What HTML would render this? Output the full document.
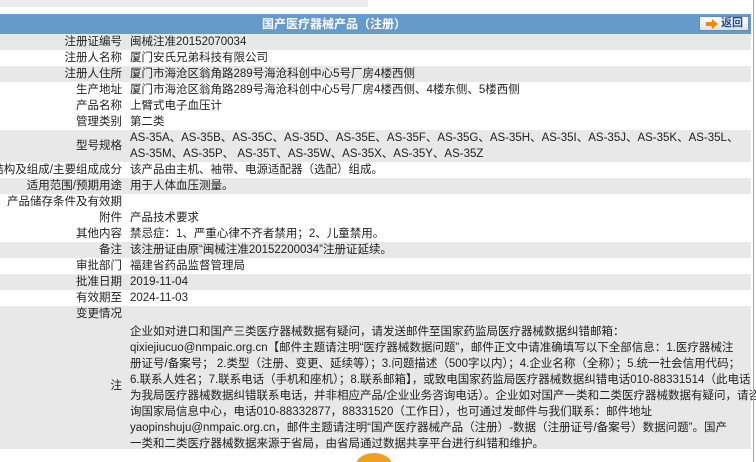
<!DOCTYPE html>
<html><head><meta charset="utf-8"><style>
html,body{margin:0;padding:0;background:#fff;width:756px;height:462px;overflow:hidden;position:relative;
font-family:"Liberation Sans","Noto Sans CJK SC",sans-serif;font-size:11.5px;color:#222;}
.top{position:absolute;left:0;top:0;width:368px;height:7px;background:#ececec}
.hdr{position:absolute;left:0;top:14px;width:751px;height:20px;background:#6699cc;color:#fff;font-weight:bold;line-height:20px;font-size:12px}
.btn{position:absolute;left:699px;top:16px;width:50px;height:15px;border:1px solid #6a8db8;border-radius:2px;background:linear-gradient(#fff,#dde3ea);box-sizing:border-box;font-size:11px;color:#1d4f8f;font-weight:bold;line-height:13px}
.row{position:absolute;left:0;width:751px;white-space:nowrap}
.g{background:#e8e8e8}
.l{position:absolute;right:629px;top:0;text-align:right;line-height:16px}
.v{position:absolute;left:130px;top:0;line-height:16px}
.sb{position:absolute;left:753px;top:0;width:1px;height:462px;background:#aaa}
</style></head><body>
<div class="top"></div>
<div class="hdr"><span style="position:absolute;left:262px">国产医疗器械产品（注册）</span></div>
<div class="btn"><svg width="14" height="12" style="position:absolute;left:5px;top:1px" viewBox="0 0 14 12"><path d="M1 4h6V1l6 5-6 5V8H1z" fill="#f08a00"/></svg><span style="position:absolute;left:21px;top:0">返回</span></div>

<div class="row g" style="top:34px;height:16px"><div class="l">注册证编号</div><div class="v">闽械注准20152070034</div></div>
<div class="row" style="top:50px;height:16px"><div class="l">注册人名称</div><div class="v">厦门安氏兄弟科技有限公司</div></div>
<div class="row g" style="top:66px;height:16px"><div class="l">注册人住所</div><div class="v">厦门市海沧区翁角路289号海沧科创中心5号厂房4楼西侧</div></div>
<div class="row" style="top:82px;height:16px"><div class="l">生产地址</div><div class="v">厦门市海沧区翁角路289号海沧科创中心5号厂房4楼西侧、4楼东侧、5楼西侧</div></div>
<div class="row" style="top:98px;height:16px"><div class="l">产品名称</div><div class="v">上臂式电子血压计</div></div>
<div class="row" style="top:114px;height:16px"><div class="l">管理类别</div><div class="v">第二类</div></div>
<div class="row g" style="top:130px;height:32px"><div class="l" style="top:8px">型号规格</div><div class="v">AS-35A、AS-35B、AS-35C、AS-35D、AS-35E、AS-35F、AS-35G、AS-35H、AS-35I、AS-35J、AS-35K、AS-35L、<br>AS-35M、AS-35P、 AS-35T、AS-35W、AS-35X、AS-35Y、AS-35Z</div></div>
<div class="row" style="top:162px;height:16px"><div class="l">结构及组成/主要组成成分</div><div class="v">该产品由主机、袖带、电源适配器（选配）组成。</div></div>
<div class="row g" style="top:178px;height:16px"><div class="l">适用范围/预期用途</div><div class="v">用于人体血压测量。</div></div>
<div class="row" style="top:194px;height:16px"><div class="l">产品储存条件及有效期</div><div class="v"></div></div>
<div class="row" style="top:210px;height:16px"><div class="l">附件</div><div class="v">产品技术要求</div></div>
<div class="row" style="top:226px;height:16px"><div class="l">其他内容</div><div class="v">禁忌症：1、严重心律不齐者禁用；2、儿童禁用。</div></div>
<div class="row g" style="top:242px;height:16px"><div class="l">备注</div><div class="v">该注册证由原“闽械注准20152200034”注册证延续。</div></div>
<div class="row" style="top:258px;height:16px"><div class="l">审批部门</div><div class="v">福建省药品监督管理局</div></div>
<div class="row g" style="top:274px;height:16px"><div class="l">批准日期</div><div class="v">2019-11-04</div></div>
<div class="row" style="top:290px;height:16px"><div class="l">有效期至</div><div class="v">2024-11-03</div></div>
<div class="row g" style="top:306px;height:16px"><div class="l">变更情况</div><div class="v"></div></div>
<div class="row g" style="top:322px;height:127px"><div class="l" style="top:56px">注</div><div class="v" style="top:2px">企业如对进口和国产三类医疗器械数据有疑问，请发送邮件至国家药监局医疗器械数据纠错邮箱：<br>qixiejiucuo@nmpaic.org.cn【邮件主题请注明“医疗器械数据问题”，邮件正文中请准确填写以下全部信息：1.医疗器械注<br>册证号/备案号； 2.类型（注册、变更、延续等）；3.问题描述（500字以内）；4.企业名称（全称）；5.统一社会信用代码；<br>6.联系人姓名；7.联系电话（手机和座机）；8.联系邮箱】，或致电国家药监局医疗器械数据纠错电话010-88331514（此电话<br>为我局医疗器械数据纠错联系电话，并非相应产品/企业业务咨询电话）。企业如对国产一类和二类医疗器械数据有疑问，请咨<br>询国家局信息中心，电话010-88332877，88331520（工作日），也可通过发邮件与我们联系：邮件地址<br>yaopinshuju@nmpaic.org.cn，邮件主题请注明“国产医疗器械产品（注册）-数据（注册证号/备案号）数据问题”。国产<br>一类和二类医疗器械数据来源于省局，由省局通过数据共享平台进行纠错和维护。</div></div>
<div style="position:absolute;left:356px;top:453px;width:36px;height:24px;border-radius:50%;background:#f0a020"></div>
<div class="sb"></div>
</body></html>
